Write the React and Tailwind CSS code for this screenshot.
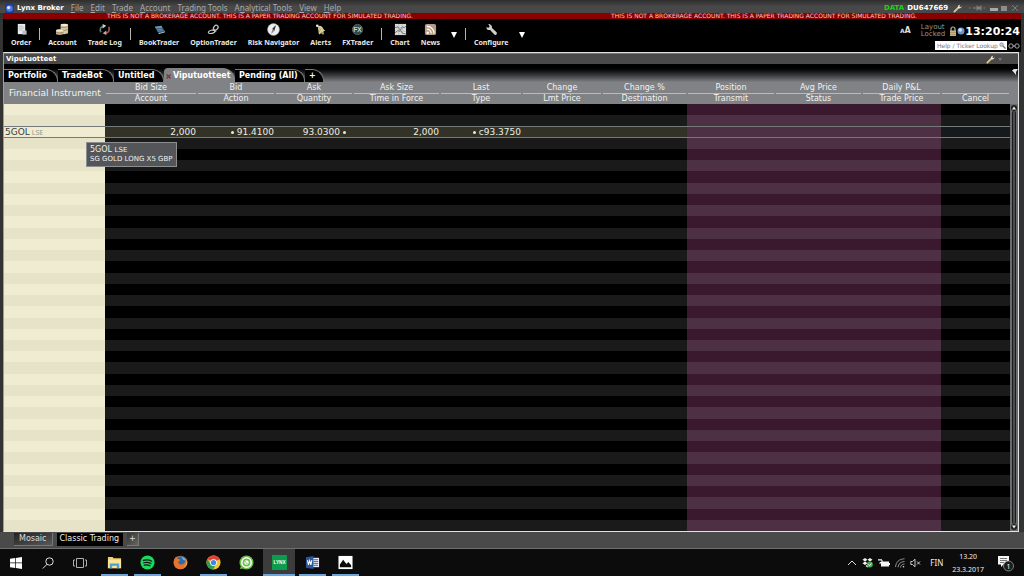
import React from "react";

const UI = "font-['DejaVu_Sans',Verdana,sans-serif]";
const COMPACT = "font-['Noto_Sans','Open_Sans',sans-serif]";

const WARNING =
  "THIS IS NOT A BROKERAGE ACCOUNT. THIS IS A PAPER TRADING ACCOUNT FOR SIMULATED TRADING.";

/* label split around its underlined access key */
const MENUS = [
  ["", "F", "ile"],
  ["", "E", "dit"],
  ["", "T", "rade"],
  ["", "A", "ccount"],
  ["T", "r", "ading Tools"],
  ["A", "n", "alytical Tools"],
  ["", "V", "iew"],
  ["", "H", "elp"],
];

const TOOL_ICONS = {
  Order: (
    <>
      <path d="M3 1h8v11H3z" fill="#e8ecec" />
      <path d="M4 3.500h5M4 5.500h6M4 7.500h4" stroke="#a5adad" strokeWidth=".8" />
      <path d="M8 8h4.500v4.500H8z" fill="#b9bec0" />
    </>
  ),
  Account: (
    <>
      <path d="M5 2l4-1 4 1v9l-4 1-4-1z" fill="#d8c9a4" />
      <path d="M0 8l4-1 4 1v4l-4 1-4-1z" fill="#c9b68e" />
      <path d="M5 4l4 1 4-1M5 7l4 1 4-1M0 10l4 1 4-1" stroke="#8d7b58" strokeWidth=".8" fill="none" />
      <ellipse cx="9" cy="2" rx="4" ry="1.300" fill="#f3ead2" />
      <ellipse cx="4" cy="8" rx="4" ry="1.300" fill="#efe4c6" />
    </>
  ),
  "Trade Log": (
    <>
      <path d="M3 10C1.500 6.500 3 4 6 3.500" stroke="#5f8077" strokeWidth="1.800" fill="none" />
      <path d="M5 1l4 2-4 3z" fill="#c4d1cc" />
      <path d="M11.500 4c1.500 3.500 0 6.500-3 7" stroke="#a9584e" strokeWidth="1.800" fill="none" />
      <path d="M9 13l-4-2 4-3z" fill="#c9a7a0" />
    </>
  ),
  BookTrader: (
    <>
      <path d="M2 4l7-1 4 6-7 2z" fill="#36597c" />
      <path d="M2 4l7-1 1 2-7 1z" fill="#6c94b4" />
      <path d="M4 7.500l6-1M5 9l6-1" stroke="#86a3bb" strokeWidth=".7" />
      <path d="M6 11l7-2v1l-7 2z" fill="#b9c4cc" />
    </>
  ),
  OptionTrader: (
    <g fill="none" stroke="#c5c8c4" strokeWidth="1.300">
      <ellipse cx="9.500" cy="5" rx="2.800" ry="2.200" transform="rotate(-50 9.500 5)" />
      <ellipse cx="5" cy="9.500" rx="3.600" ry="1.700" transform="rotate(-12 5 9.500)" />
      <path d="M6 7l4 2" />
    </g>
  ),
  "Risk Navigator": (
    <>
      <circle cx="7" cy="7" r="6.400" fill="#ededed" stroke="#a6a6a6" strokeWidth=".6" />
      <path d="M9.500 2.500L8 8l-3.500 4L6 6z" fill="#8a8a8a" />
      <path d="M9.500 2.500L8 8 6 6z" fill="#333" />
    </>
  ),
  Alerts: (
    <>
      <path d="M4 3.500c3-1.500 5 0 6.500 3.500l1.500 1-6.500 4.500-.5-2.500z" fill="#d8ce9b" />
      <path d="M4 3.500L7 7l-2 3.500" stroke="#a4986a" strokeWidth=".8" fill="none" />
      <circle cx="3.500" cy="3" r="1.400" fill="#f1ead0" />
      <circle cx="9.500" cy="11" r="1.300" fill="#a89b69" />
    </>
  ),
  FXTrader: (
    <>
      <circle cx="7" cy="7" r="5.500" fill="#314a4c" stroke="#6d8484" strokeWidth=".7" />
      <text x="7" y="9.500" textAnchor="middle" fontSize="7" fontWeight="700" fill="#c5d3d1" fontFamily="Liberation Sans">FX</text>
    </>
  ),
  Chart: (
    <>
      <path d="M1 1h12v12H1z" fill="#d9dbda" />
      <path d="M1 5h12M1 9h12M5 1v12M9 1v12" stroke="#b4b8b6" strokeWidth=".6" />
      <path d="M1 11l3-3 2 1 3-5 2 1 2-2M1 5l3-1 3 4 2 3 4 1" stroke="#6e7472" fill="none" />
    </>
  ),
  News: (
    <>
      <rect x="1" y="1" width="12" height="12" rx="2" fill="#b79c84" />
      <circle cx="4" cy="10.500" r="1.300" fill="#fff" />
      <path d="M3 6.500a4.800 4.800 0 0 1 4.800 4.800M3 3.500a7.800 7.800 0 0 1 7.800 7.800" stroke="#fff" strokeWidth="1.400" fill="none" />
    </>
  ),
  Configure: (
    <path d="M3.500 1l1.500 2.500-1 1.500-2.500-.5C1.500 7 3.500 8 5.500 7.500l4.500 5c2 1 3.500-.5 2.500-2.500L7.500 5.500C8 3 6 1 3.500 1z" fill="#cfcfcf" />
  ),
};

const TOOL_GROUPS = [
  ["Order"],
  ["Account", "Trade Log"],
  ["BookTrader", "OptionTrader", "Risk Navigator", "Alerts", "FXTrader"],
  ["Chart", "News", "More news tools"],
  ["Configure", "More configure tools"],
];

const COLUMNS = [
  ["Bid Size", "Account"],
  ["Bid", "Action"],
  ["Ask", "Quantity"],
  ["Ask Size", "Time in Force"],
  ["Last", "Type"],
  ["Change", "Lmt Price"],
  ["Change %", "Destination"],
  ["Position", "Transmit"],
  ["Avg Price", "Status"],
  ["Daily P&L", "Trade Price"],
  ["", "Cancel"],
];

const GRID =
  "grid grid-cols-[101fr_92fr_78fr_78fr_87fr_82fr_80fr_85fr_88fr_87fr_79fr_69fr]";

const ROW_COUNT = 38;
const QUOTE_ROW = 2;

function ToolButton({ name }) {
  if (name.startsWith("More")) {
    return (
      <button type="button" aria-label={name} className="self-center">
        <svg viewBox="0 0 6 6" className="size-1.5"><path d="M0 0h6L3 6z" fill="#fff" /></svg>
      </button>
    );
  }
  return (
    <button type="button" className="flex flex-col items-center gap-[2px]">
      <svg viewBox="0 0 14 14" className="size-[13px]" aria-hidden="true">{TOOL_ICONS[name]}</svg>
      <span className={`${COMPACT} whitespace-nowrap text-[7px] leading-[9px] font-bold text-[#e8e8e8]`}>{name}</span>
    </button>
  );
}

function Wrench() {
  return (
    <svg viewBox="0 0 10 10" className="size-[9px]" aria-hidden="true">
      <path d="M1.500 8.500L6 4" stroke="#d9c9a0" strokeWidth="2" strokeLinecap="round" />
      <path d="M5.500 4.500C5 2.500 6 1 8 .8L7 2.500l1 1L9.500 2.500C9.500 4.500 7.500 5.500 5.500 4.500z" fill="#f0e6cc" />
    </svg>
  );
}

function TitleBar() {
  return (
    <header className="flex h-[13px] items-center bg-linear-to-b from-[#2e2e2e] via-[#484848] to-[#484848] pt-[3px] pr-[5px] pl-[5px] text-[7px] leading-[9px]">
      <svg viewBox="0 0 10 10" className="mr-[3px] size-[9px]" aria-hidden="true">
        <rect width="10" height="10" rx="1" fill="#1d3a9c" />
        <circle cx="5" cy="5" r="3.600" fill="#4f79dc" />
        <circle cx="4" cy="4" r="1.800" fill="#dbe8ff" />
      </svg>
      <h1 className="font-bold text-white">Lynx Broker</h1>
      <nav className="ml-[7px] flex gap-[7px]">
        {MENUS.map(([a, k, b]) => (
          <button key={a + k + b} type="button" className={`${COMPACT} whitespace-nowrap text-[8px] leading-[8px] text-[#aaa]`}>
            {a}<u className="underline-offset-1">{k}</u>{b}
          </button>
        ))}
      </nav>
      <div className="ml-auto flex items-center">
        <span className="font-bold text-[#12d512]">DATA</span>
        <span className="ml-[3px] font-bold text-white">DU647669</span>
        <button type="button" aria-label="Settings" className="ml-[5px]"><Wrench /></button>
        <button type="button" aria-label="Pin" className="ml-1.5">
          <svg viewBox="0 0 18 8" className="h-2 w-[18px]">
            <path d="M1 4h1.500M15.500 4H17" stroke="#6c6c6c" strokeWidth="1.500" />
            <path d="M5 4h3.500M9 1.500v5M13 1.500v5" stroke="#808080" />
            <path d="M9 2.500h4v3H9z" fill="#808080" />
          </svg>
        </button>
        <button type="button" aria-label="Minimize" className="ml-1">
          <svg viewBox="0 0 8 8" className="size-2"><path d="M0 4h8v3H0z" fill="#a8a8a8" /></svg>
        </button>
        <button type="button" aria-label="Maximize" className="ml-[3px]">
          <svg viewBox="0 0 6 8" className="h-2 w-1.5"><path d="M0 2h6v5H0z" fill="#8c8c8c" /></svg>
        </button>
        <button type="button" aria-label="Close" className="ml-1">
          <svg viewBox="0 0 8 8" className="size-2"><path d="M1 1l6 6M7 1L1 7" stroke="#7c7c7c" /></svg>
        </button>
      </div>
    </header>
  );
}

function Toolbar() {
  return (
    <div className="mx-[3px] flex h-[33px] items-start justify-between bg-black">
      <div className="flex gap-2 pt-1 pl-2">
        {TOOL_GROUPS.map((group, i) => (
          <React.Fragment key={group[0]}>
            {i > 0 && <span className="mt-[5px] h-3 w-px bg-[#b5b5b5]" />}
            <div className="flex gap-[11px]">
              {group.map((name) => <ToolButton key={name} name={name} />)}
            </div>
          </React.Fragment>
        ))}
      </div>
      <div className="flex flex-col items-end pr-px">
        <div className="flex h-[22px] items-center pt-[2px]">
          <button type="button" aria-label="Font size" className="mr-2.5 flex items-baseline font-bold text-[#ddd]">
            <span className="text-[6px]">A</span><span className="text-[8px]">A</span>
          </button>
          <span className="mr-1 text-[7px] leading-[7px] text-[#9a9686]">Layout<br />Locked</span>
          <svg viewBox="0 0 8 11" className="h-[11px] w-2" aria-hidden="true">
            <path d="M2 5V3a2 2 0 0 1 4 0v2" stroke="#b9b9b0" strokeWidth="1.200" fill="none" />
            <rect x="1" y="4.500" width="6" height="5.500" fill="#cdb27a" />
            <path d="M1 6.500h6M1 8.500h6" stroke="#9a8353" strokeWidth=".6" />
          </svg>
          <svg viewBox="0 0 8 8" className="size-2" aria-hidden="true">
            <circle cx="4" cy="4" r="3.500" fill="#6f94c9" />
            <circle cx="3.200" cy="3" r="1.800" fill="#d2e0f2" />
          </svg>
          <time className="text-[11px] leading-none font-bold text-white">13:20:24</time>
        </div>
        <div className="flex items-center gap-px">
          <label className="flex h-[9px] w-[72px] items-center bg-white pr-px pl-[2px]">
            <input aria-label="Help / Ticker Lookup" placeholder="Help / Ticker Lookup" className="w-full min-w-0 text-[6px] leading-none text-[#555] outline-none placeholder:text-[#777]" />
            <svg viewBox="0 0 8 8" className="size-[7px] shrink-0" aria-hidden="true">
              <circle cx="3" cy="3" r="2" stroke="#8b8b8b" fill="#c9d3da" /><path d="M4.500 4.500L7.500 7.500" stroke="#777" strokeWidth="1.500" />
            </svg>
          </label>
          <button type="button" aria-label="Link">
            <svg viewBox="0 0 12 6" className="h-1.5 w-3" fill="none" stroke="#a5a5a5">
              <circle cx="3" cy="3" r="2.200" /><circle cx="9" cy="3" r="2.200" /><path d="M4.500 3h3" />
            </svg>
          </button>
        </div>
      </div>
    </div>
  );
}

function Tabs() {
  const idle =
    "flex h-[13px] items-center rounded-tr-xl border-t border-r border-[#77797b] bg-black pl-1 text-white";
  return (
    <div className="flex h-[18px] items-end justify-between border-t-2 border-black bg-linear-to-b from-black to-[#7e8083]">
      <div role="tablist" className="flex items-end text-[8px] leading-[10px] font-bold">
        <button type="button" role="tab" className={`${idle} w-[54px]`}>Portfolio</button>
        <button type="button" role="tab" className={`${idle} w-[56px]`}>TradeBot</button>
        <button type="button" role="tab" className={`${idle} w-[50px]`}>Untitled</button>
        <button type="button" role="tab" aria-selected="true" className="flex h-[14px] w-[71px] items-center gap-[2px] rounded-tl-sm rounded-tr-xl bg-[#808285] pt-[2px] pl-[2px] text-white">
          <svg viewBox="0 0 5 5" className="size-[5px] shrink-0" aria-hidden="true"><path d="M.5.5l4 4M4.500.5l-4 4" stroke="#7e3434" strokeWidth="1.300" /></svg>
          Viputuotteet
        </button>
        <button type="button" role="tab" className={`${idle} w-[70px] whitespace-nowrap`}>Pending (All)</button>
        <button type="button" aria-label="Add tab" className={`${idle} w-[19px]`}>+</button>
      </div>
      <svg viewBox="0 0 6 8" className="mb-1.5 h-2 w-1.5" aria-hidden="true">
        <path d="M0 2.500L2 1h4L4 4v3L2 4.500z" fill="#dfe4ea" />
      </svg>
    </div>
  );
}

function Dot() {
  return <span className="size-[3px] shrink-0 rounded-full bg-[#f3efb0]" />;
}

const QUOTE = {
  1: "2,000",
  2: <><Dot />91.4100</>,
  3: <>93.0300<Dot /></>,
  4: "2,000",
  5: <><Dot />c93.3750</>,
};

function Row({ index }) {
  const quoted = index === QUOTE_ROW;
  const even = index % 2 === 0;
  const cream = even ? "bg-[#efecd2]" : "bg-[#e6e3c8]";
  const dark = quoted ? "bg-[#333226]" : even ? "bg-black" : "bg-[#1a1a1a]";
  const plum = even && !quoted ? "bg-[#3a182e]" : "bg-[#4e3044]";
  const last = quoted ? "bg-[#171a1d]" : dark;
  const outline = quoted ? "border-y border-[#74797a]" : "";
  return (
    <tr className={`${GRID} min-h-0 text-[9px] leading-[9px]`}>
      <th scope="row" className={`${cream} ${outline} flex min-h-0 min-w-0 items-center pl-px text-left font-normal whitespace-nowrap text-[#3b3b36]`}>
        {quoted && <>5GOL<span className={`${COMPACT} ml-[2px] text-[7px] text-[#99978a]`}>LSE</span></>}
      </th>
      {COLUMNS.map((_, k) => {
        const col = k + 1;
        const bg = col === 11 ? last : col >= 8 ? plum : dark;
        const end = col === 3 ? "pr-[7px]" : "pr-px";
        return (
          <td key={col} className={`${bg} ${outline} ${end} flex min-h-0 min-w-0 items-center justify-end gap-[3px] whitespace-nowrap text-[#eeeee4]`}>
            {quoted && QUOTE[col]}
          </td>
        );
      })}
    </tr>
  );
}

function Watchlist() {
  return (
    <div className="relative flex min-h-0 flex-1 bg-[#808285]">
      <table className="flex min-w-0 flex-1 flex-col">
        <thead className="block">
          <tr className={`${GRID} h-[22px] text-[8px] leading-[11px] text-[#f2f2f2]`}>
            <th scope="col" className="self-center pl-[5px] text-left text-[9px] font-normal whitespace-nowrap">Financial Instrument</th>
            {COLUMNS.map(([top, bottom]) => (
              <th key={bottom} scope="col" className="flex min-w-0 flex-col font-normal whitespace-nowrap">
                <span className="mx-px h-[12px] border-b border-[#b9babc] leading-[11px]">{top}</span>
                <span className="leading-[10px]">{bottom}</span>
              </th>
            ))}
          </tr>
        </thead>
        <tbody className="grid min-h-0 flex-1 auto-rows-fr">
          {Array.from({ length: ROW_COUNT }, (_, i) => <Row key={i} index={i} />)}
        </tbody>
      </table>
      <div className="mt-[22px] flex w-2 flex-col items-center justify-between bg-[#6a6c6e] py-px">
        <svg viewBox="0 0 6 6" className="size-1.5" aria-hidden="true"><circle cx="3" cy="3" r="3" fill="#222" /><path d="M3 1.500L5 4.500H1z" fill="#eee" /></svg>
        <span className="w-1 flex-1 rounded-full border-x border-[#1c1c1c] bg-[#4c4d4f]" />
        <svg viewBox="0 0 6 6" className="size-1.5" aria-hidden="true"><circle cx="3" cy="3" r="3" fill="#222" /><path d="M3 4.500L5 1.500H1z" fill="#eee" /></svg>
      </div>
      <div role="tooltip" className="absolute top-[60px] left-[82px] border border-[#8d8e90] bg-[#545558] px-[3px] py-[2px] text-[7px] leading-[9px] whitespace-nowrap text-[#f0f0f0]">
        <p className="text-[8px] leading-[10px]">5GOL <span className="text-[7px]">LSE</span></p>
        <p>SG GOLD LONG X5 GBP</p>
      </div>
    </div>
  );
}

function Panel() {
  return (
    <main className="mr-[5px] ml-[3px] flex min-h-0 flex-1 flex-col border border-[#e2e2e2] border-l-[#9b9b9b]">
      <div className="flex h-[11px] items-center justify-between border-t border-[#777] bg-[#4a4a4a] pr-[16px] pl-[2px]">
        <h2 className="text-[7px] leading-[9px] font-bold text-white">Viputuotteet</h2>
        <button type="button" aria-label="Panel settings" className="flex items-center gap-[3px]">
          <Wrench />
          <svg viewBox="0 0 4 3" className="h-[3px] w-1"><path d="M0 0h4L2 3z" fill="#777" /></svg>
        </button>
      </div>
      <Tabs />
      <Watchlist />
    </main>
  );
}

function Workspaces() {
  const tab = "flex h-[13px] items-center border-r border-b text-[8px] leading-none";
  return (
    <div className="flex h-[17px] items-start gap-1 border-b border-[#707070] bg-[#4a4a4a] pt-px pl-3.5">
      <button type="button" className={`${tab} border-[#777] bg-linear-to-br from-[#222] to-[#5a5a5a] px-[5px] text-[#ddd]`}>Mosaic</button>
      <button type="button" className={`${tab} border-black bg-black px-[3px] text-[#eee]`}>Classic Trading</button>
      <button type="button" aria-label="Add workspace" className={`${tab} border-[#777] bg-linear-to-br from-[#333] to-[#666] px-[2px] text-[#ddd]`}>+</button>
    </div>
  );
}

const TASKS = [
  {
    name: "File Explorer", open: true,
    icon: (
      <>
        <path d="M1 2h5l1 1.500h8V14H1z" fill="#f3cf6b" />
        <path d="M1 5h14v9H1z" fill="#fbe39a" />
        <path d="M3 14V9h10v5h-2.500v-2.500h-5V14z" fill="#4ba3cf" />
      </>
    ),
  },
  {
    name: "Spotify", open: true,
    icon: (
      <>
        <circle cx="8" cy="8" r="7.500" fill="#1ed760" />
        <path d="M3.500 5.800c3-.9 6.500-.6 9 .8M4 8.300c2.600-.7 5.400-.4 7.600.8M4.500 10.700c2.200-.5 4.300-.3 6.200.7" stroke="#0b1a10" strokeWidth="1.300" strokeLinecap="round" fill="none" />
      </>
    ),
  },
  {
    name: "Firefox",
    icon: (
      <>
        <circle cx="8" cy="8" r="7.300" fill="#e4702a" />
        <circle cx="8.500" cy="6.500" r="5.200" fill="#2d6ca8" />
        <path d="M9 2c2 0 4 1.500 4.500 4L11 5z" fill="#7fb9df" />
        <path d="M.8 6C1.500 3 3 2 4 1.500L4.500 4c2 0 2.500 1 3 1.800L5.800 7c-.3 2 1.200 3.500 3.500 3 2-.3 3.500-1.500 4-3.500.5-1.500.3-2.500 0-3.500C16 6 15.800 9.500 14 12c-2 3-6.500 4-9.500 2.500S.3 10 .8 6z" fill="#e8732a" />
        <path d="M14 5c1 3 0 6-2.500 8 3-1 4.500-5 2.500-8z" fill="#f7c84b" />
      </>
    ),
  },
  {
    name: "Chrome", open: true,
    icon: (
      <>
        <circle cx="8" cy="8" r="7.500" fill="#f2c430" />
        <path d="M8 8L1.500 4.250A7.500 7.500 0 0 1 14.500 4.250z" fill="#dc4436" />
        <path d="M8 .5a7.500 7.500 0 0 1 6.500 4.250H8z" fill="#dc4436" />
        <path d="M1.500 4.250A7.500 7.500 0 0 0 7.500 15.500L10.800 9.600 5 9.600z" fill="#2f9e52" />
        <circle cx="8" cy="8" r="3.600" fill="#fff" />
        <circle cx="8" cy="8" r="2.800" fill="#4285e8" />
      </>
    ),
  },
  {
    name: "WhatsApp",
    icon: (
      <>
        <circle cx="8" cy="8" r="7.500" fill="#6cc04a" />
        <path d="M1 15l1.500-4.500L5.500 14z" fill="#6cc04a" />
        <circle cx="8" cy="8" r="5" fill="none" stroke="#fff" strokeWidth="1.600" />
        <circle cx="8" cy="8" r="2.400" fill="#fff" />
        <path d="M7 6.800c0 1.400 1 2.300 2.200 2.400" stroke="#6cc04a" fill="none" />
      </>
    ),
  },
  {
    name: "Lynx", open: true, active: true,
    icon: (
      <>
        <rect width="16" height="16" fill="#0d9b50" />
        <text x="8" y="10" textAnchor="middle" fontSize="5" fontWeight="700" fill="#fff" fontFamily="Liberation Sans">LYNX</text>
      </>
    ),
  },
  {
    name: "Word", open: true,
    icon: (
      <>
        <path d="M8 3h7v10H8z" fill="#e9eef7" />
        <path d="M9 5h5M9 7h5M9 9h5M9 11h5" stroke="#2b579a" strokeWidth=".9" />
        <path d="M1 2.500L9 1v14l-8-1.500z" fill="#2b579a" />
        <path d="M2.700 5.500l1 5 1.300-4.500 1.300 4.500 1-5" stroke="#fff" strokeWidth="1.100" fill="none" />
      </>
    ),
  },
  {
    name: "Photos", open: true,
    icon: (
      <>
        <rect x="0.500" y="1" width="15" height="14" fill="#fff" />
        <path d="M2 13v-3l3.500-5L9 9.500l2-2L14 11v2z" fill="#0c0c0c" />
      </>
    ),
  },
];

function Taskbar() {
  return (
    <footer className="flex h-[27px] shrink-0 items-stretch justify-between bg-[#0c0c0c]">
      <div className="flex">
        <button type="button" aria-label="Start" className="grid w-8 place-items-center">
          <svg viewBox="0 0 12 12" className="size-3"><path d="M0 1.700L5.200 1v4.600H0zM5.900.9L12 0v5.600H5.900zM0 6.300h5.200V11L0 10.300zM5.900 6.300H12V12l-6.100-.9z" fill="#fff" /></svg>
        </button>
        <button type="button" aria-label="Search" className="grid w-8 place-items-center">
          <svg viewBox="0 0 12 12" className="size-3" fill="none" stroke="#e0e0e0"><circle cx="7.500" cy="4.500" r="3.700" /><path d="M5 7.300L.8 11.500" /></svg>
        </button>
        <button type="button" aria-label="Task view" className="grid w-8 place-items-center">
          <svg viewBox="0 0 14 12" className="h-3 w-3.5" fill="none" stroke="#b0b0b0"><path d="M3.500 1.500h7v9h-7zM2 3H.5v6H2M12 3h1.500v6H12" /></svg>
        </button>
        <div className="ml-[2px] flex gap-px">
          {TASKS.map(({ name, icon, open, active }) => (
            <button key={name} type="button" aria-label={name} className={`flex w-8 flex-col items-center justify-end ${active ? "bg-[#3c3c3c]" : ""}`}>
              <svg viewBox="0 0 16 16" className="mb-1 size-[15px]">{icon}</svg>
              <span className={`h-[2px] ${active ? "w-full" : "w-[27px]"} ${open ? "bg-[#6ba5dc]" : ""}`} />
            </button>
          ))}
        </div>
      </div>
      <div className={`${COMPACT} flex items-center text-[8px] text-[#eee]`}>
        <div className="flex items-center gap-[5px]">
          <svg viewBox="0 0 10 10" className="size-[10px]" fill="none" stroke="#ddd" aria-hidden="true"><path d="M1 7l4-4 4 4" /></svg>
          <svg viewBox="0 0 11 11" className="size-[11px]" aria-hidden="true">
            <path d="M3 1l2.500 1.700L3 4.400.5 2.700zM8 1l2.500 1.700L8 4.400 5.500 2.700zM3 4.600l2.500 1.700L3 8 .5 6.300zM5.500 7.500l2 1.500-2 1.500-2-1.500z" fill="#f2f2f2" />
            <circle cx="7.800" cy="7.500" r="3" fill="#3fae49" /><path d="M6.300 7.500l1.200 1.200 2-2.200" stroke="#fff" fill="none" />
          </svg>
          <svg viewBox="0 0 12 10" className="h-[10px] w-3" aria-hidden="true"><path d="M3 3.500h8v5H3zM11 5h1v2h-1z" fill="#f5f5f5" /><path d="M0 2h4v2.500H2V6M1 1v1M3 1v1" stroke="#f5f5f5" fill="none" /></svg>
          <svg viewBox="0 0 10 10" className="size-[10px]" fill="none" stroke="#8f8f8f" aria-hidden="true"><path d="M.5 9C1 4 4 1 9.500.8M3 9.300C3.300 6 5.500 3.600 9.500 3.500M5.500 9.500C5.700 7.500 7 6.200 9.500 6" /><circle cx="8.500" cy="8.700" r=".8" fill="#ddd" stroke="none" /></svg>
          <svg viewBox="0 0 11 10" className="h-[10px] w-[11px]" fill="none" stroke="#ddd" strokeWidth=".9" aria-hidden="true"><path d="M.8 3.500h1.700L5 1.200v7.600L2.500 6.500H.8zM7 3.500l3 3M10 3.500l-3 3" /></svg>
        </div>
        <span className="ml-[9px]">FIN</span>
        <time className="ml-[9px] text-center text-[7px] leading-[13px]">13.20<br />23.3.2017</time>
        <button type="button" aria-label="Notifications" className="mr-[10px] ml-[13px]">
          <svg viewBox="0 0 17 18" className="h-[18px] w-[17px]">
            <path d="M1 2h11v8.500H6.500L4 13v-2.500H1z" fill="#f4f4f4" />
            <path d="M3 4.500h7M3 6.500h7M3 8.500h4" stroke="#555" strokeWidth=".8" />
            <circle cx="11.500" cy="12" r="5" fill="#1c1c1c" stroke="#999" strokeWidth=".8" />
            <text x="11.500" y="14.700" textAnchor="middle" fontSize="7" fill="#fff" fontFamily="Noto Sans">1</text>
          </svg>
        </button>
      </div>
    </footer>
  );
}

export default function App() {
  return (
    <div className={`${UI} flex h-screen flex-col bg-[#333] text-white`}>
      <TitleBar />
      <div className="mx-[3px] grid h-1.5 grid-cols-2 items-center overflow-hidden bg-[#8a0000] px-[5px] text-center text-[6px] leading-[6px] whitespace-nowrap text-[#f0c8c8]">
        <span>{WARNING}</span>
        <span>{WARNING}</span>
      </div>
      <Toolbar />
      <Panel />
      <Workspaces />
      <Taskbar />
    </div>
  );
}
